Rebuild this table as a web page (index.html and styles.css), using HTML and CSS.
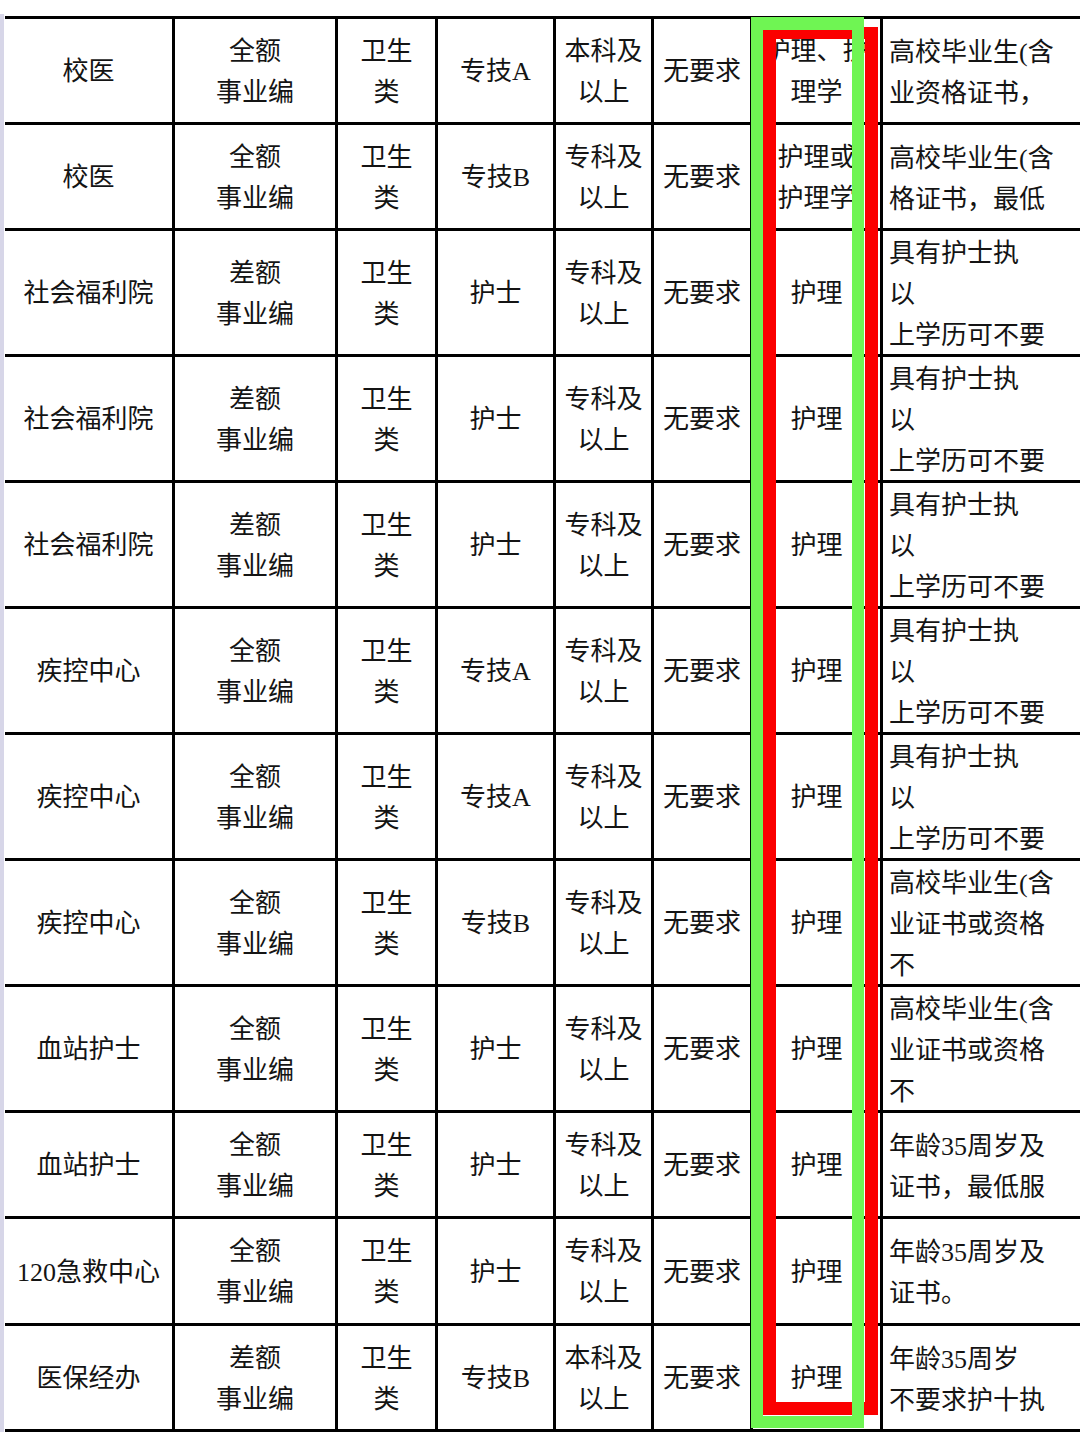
FILE: index.html
```html
<!DOCTYPE html>
<html lang="zh-CN">
<head>
<meta charset="utf-8">
<title>岗位表</title>
<link rel="stylesheet" href="styles.css">
</head>
<body>
<div class="sheet">
  <div class="frame">
    <table class="grid">
      <colgroup>
        <col class="c1"><col class="c2"><col class="c3"><col class="c4"><col class="c5"><col class="c6"><col class="c7"><col class="c8">
      </colgroup>
      <tbody>
        <tr class="h106 first">
          <td>校医</td><td>全额<br>事业编</td><td>卫生<br>类</td><td>专技A</td><td>本科及<br>以上</td><td>无要求</td><td>护理、护<br>理学</td>
          <td class="note"><div class="clip">高校毕业生(含<br>业资格证书，</div></td>
        </tr>
        <tr class="h106">
          <td>校医</td><td>全额<br>事业编</td><td>卫生<br>类</td><td>专技B</td><td>专科及<br>以上</td><td>无要求</td><td>护理或<br>护理学</td>
          <td class="note"><div class="clip">高校毕业生(含<br>格证书，最低</div></td>
        </tr>
        <tr class="h126">
          <td>社会福利院</td><td>差额<br>事业编</td><td>卫生<br>类</td><td>护士</td><td>专科及<br>以上</td><td>无要求</td><td>护理</td>
          <td class="note"><div class="clip">具有护士执<br>以<br>上学历可不要</div></td>
        </tr>
        <tr class="h126">
          <td>社会福利院</td><td>差额<br>事业编</td><td>卫生<br>类</td><td>护士</td><td>专科及<br>以上</td><td>无要求</td><td>护理</td>
          <td class="note"><div class="clip">具有护士执<br>以<br>上学历可不要</div></td>
        </tr>
        <tr class="h126">
          <td>社会福利院</td><td>差额<br>事业编</td><td>卫生<br>类</td><td>护士</td><td>专科及<br>以上</td><td>无要求</td><td>护理</td>
          <td class="note"><div class="clip">具有护士执<br>以<br>上学历可不要</div></td>
        </tr>
        <tr class="h126">
          <td>疾控中心</td><td>全额<br>事业编</td><td>卫生<br>类</td><td>专技A</td><td>专科及<br>以上</td><td>无要求</td><td>护理</td>
          <td class="note"><div class="clip">具有护士执<br>以<br>上学历可不要</div></td>
        </tr>
        <tr class="h126">
          <td>疾控中心</td><td>全额<br>事业编</td><td>卫生<br>类</td><td>专技A</td><td>专科及<br>以上</td><td>无要求</td><td>护理</td>
          <td class="note"><div class="clip">具有护士执<br>以<br>上学历可不要</div></td>
        </tr>
        <tr class="h126">
          <td>疾控中心</td><td>全额<br>事业编</td><td>卫生<br>类</td><td>专技B</td><td>专科及<br>以上</td><td>无要求</td><td>护理</td>
          <td class="note"><div class="clip">高校毕业生(含<br>业证书或资格<br>不</div></td>
        </tr>
        <tr class="h126">
          <td>血站护士</td><td>全额<br>事业编</td><td>卫生<br>类</td><td>护士</td><td>专科及<br>以上</td><td>无要求</td><td>护理</td>
          <td class="note"><div class="clip">高校毕业生(含<br>业证书或资格<br>不</div></td>
        </tr>
        <tr class="h106">
          <td>血站护士</td><td>全额<br>事业编</td><td>卫生<br>类</td><td>护士</td><td>专科及<br>以上</td><td>无要求</td><td>护理</td>
          <td class="note"><div class="clip">年龄35周岁及<br>证书，最低服</div></td>
        </tr>
        <tr class="h107">
          <td>120急救中心</td><td>全额<br>事业编</td><td>卫生<br>类</td><td>护士</td><td>专科及<br>以上</td><td>无要求</td><td>护理</td>
          <td class="note"><div class="clip">年龄35周岁及<br>证书。</div></td>
        </tr>
        <tr class="h106">
          <td>医保经办</td><td>差额<br>事业编</td><td>卫生<br>类</td><td>专技B</td><td>本科及<br>以上</td><td>无要求</td><td>护理</td>
          <td class="note"><div class="clip">年龄35周岁<br>不要求护十执</div></td>
        </tr>
      </tbody>
    </table>
  </div>
  <div class="mark mark-red"></div>
  <div class="mark mark-green"></div>
</div>
</body>
</html>
```
FILE: styles.css
```css
html, body {
  margin: 0;
  padding: 0;
  background: #ffffff;
}

body {
  width: 1080px;
  height: 1439px;
  overflow: hidden;
  font-family: "Liberation Serif", "Noto Sans CJK SC", serif;
  font-size: 26px;
  line-height: 41px;
  color: #141414;
}

.sheet {
  position: relative;
  width: 1080px;
  height: 1439px;
  padding-top: 14px;
  box-sizing: border-box;
}

.frame {
  border-left: 4px solid #d7d6e8;
  padding-left: 1px;
  padding-top: 2px;
  width: 1075px;
}

.grid {
  table-layout: fixed;
  border-collapse: separate;
  border-spacing: 0;
  width: 1075px;
}

.c1 { width: 170px; }
.c2 { width: 163px; }
.c3 { width: 100px; }
.c4 { width: 118px; }
.c5 { width: 98px; }
.c6 { width: 99px; }
.c7 { width: 130px; }
.c8 { width: 197px; }

.grid td {
  box-sizing: border-box;
  padding: 2px 0 0 0;
  border-right: 3px solid #000;
  border-bottom: 3px solid #000;
  text-align: center;
  vertical-align: middle;
  white-space: nowrap;
  overflow: hidden;
}

.grid tr.first td {
  border-top: 3px solid #000;
}

.grid td.note {
  border-right: none;
  text-align: left;
  padding-left: 6px;
}

.clip {
  overflow: hidden;
  white-space: nowrap;
  margin-bottom: -2px;
}

.h106 { height: 106px; }
.h107 { height: 107px; }
.h126 { height: 126px; }
.grid tr.first { height: 109px; }

.mark {
  position: absolute;
  box-sizing: border-box;
}

.mark-red {
  left: 763px;
  top: 27px;
  width: 115px;
  height: 1388px;
  border: 13px solid #fb0000;
  border-top-width: 12px;
}

.mark-green {
  left: 751px;
  top: 17px;
  width: 113px;
  height: 1411px;
  border: 12px solid #6ff553;
  border-top-width: 13px;
}
```
